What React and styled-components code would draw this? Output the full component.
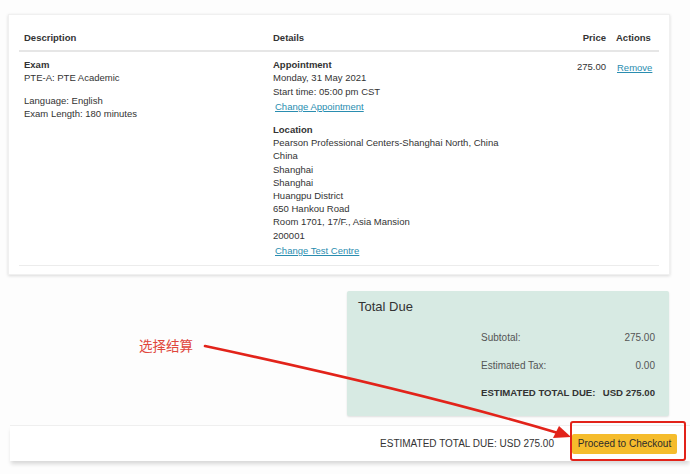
import React from 'react';
import styled, { createGlobalStyle } from 'styled-components';

const GlobalStyle = createGlobalStyle`
  html, body {
    margin: 0;
    padding: 0;
    background: #fdfdfd;
  }
  body {
    font-family: "Liberation Sans", Arial, sans-serif;
    color: #333;
  }
`;

const Page = styled.div`
  position: relative;
  width: 690px;
  height: 474px;
  overflow: hidden;
  padding-top: 14px;
  box-sizing: border-box;
`;

const Card = styled.div`
  margin-left: 8px;
  width: 662px;
  box-sizing: border-box;
  padding: 10px 10px 8px;
  background: #fff;
  border: 1px solid #f0f0f0;
  box-shadow: 0 1px 3px rgba(0, 0, 0, 0.14);
`;

const Table = styled.div`
  display: grid;
  grid-template-columns: 249px 1fr 82px 48px;
  border-bottom: 1px solid #ececec;
  font-size: 9.5px;
  line-height: 13.2px;
`;

const HeadCell = styled.div`
  padding: 6px 5px 6px;
  font-weight: bold;
  color: #333;
  border-bottom: 2px solid #e6e6e6;
  text-align: ${({ $right }) => ($right ? 'right' : 'left')};
`;

const Cell = styled.div`
  padding: ${({ $top }) => $top || 6}px 5px ${({ $bottom }) => $bottom || 0}px;
  text-align: ${({ $right }) => ($right ? 'right' : 'left')};
  color: #333;
`;

const Label = styled.div`
  font-weight: bold;
`;

const Line = styled.div``;

const Block = styled.div`
  margin-top: ${({ $gap }) => $gap || 0}px;
`;

const Link = styled.a`
  display: inline-block;
  margin-top: ${({ $gap }) => $gap || 0}px;
  margin-left: ${({ $indent }) => $indent || 0}px;
  color: #2a8db0;
  text-decoration: underline;
  cursor: pointer;
`;

const SummaryWrap = styled.div`
  display: flex;
  justify-content: flex-end;
  margin-top: 16px;
  padding-right: 21px;
`;

const Summary = styled.div`
  width: 322px;
  height: 125px;
  box-sizing: border-box;
  padding: 8px 14px 0 11px;
  background: #d7eae3;
  border-radius: 2px;
  box-shadow: 0 1px 2px rgba(0, 0, 0, 0.12);
`;

const SummaryTitle = styled.div`
  font-size: 13px;
  line-height: 16px;
  color: #333;
  margin-bottom: 9px;
`;

const SummaryRows = styled.div`
  margin-left: 123px;
`;

const SummaryRow = styled.div`
  display: flex;
  justify-content: space-between;
  height: 27.5px;
  align-items: center;
  font-size: ${({ $strong }) => ($strong ? '9.6px' : '10px')};
  font-weight: ${({ $strong }) => ($strong ? 'bold' : 'normal')};
  color: ${({ $strong }) => ($strong ? '#333' : '#555')};
`;

const Footer = styled.div`
  margin-top: 9px;
  margin-left: 10px;
  height: 35px;
  display: flex;
  align-items: center;
  justify-content: flex-end;
  gap: 18px;
  padding-right: 13px;
  background: #fff;
  border-top: 1px solid #efefef;
  box-shadow: 0 4px 4px -1px rgba(0, 0, 0, 0.15);
`;

const FooterTotal = styled.span`
  font-size: 10px;
  color: #333;
`;

const CheckoutButton = styled.button`
  width: 105px;
  height: 20px;
  padding: 0;
  border: none;
  border-radius: 2px;
  background: #f5bc2c;
  color: #2b2b2b;
  font-family: "Liberation Sans", Arial, sans-serif;
  font-size: 10px;
  cursor: pointer;
`;

const Overlay = styled.svg`
  position: absolute;
  left: 0;
  top: 0;
  pointer-events: none;
`;

const Note = styled.span`
  position: absolute;
  left: 139px;
  top: 336px;
  font-family: "Noto Sans CJK SC", sans-serif;
  font-size: 13.5px;
  line-height: 18px;
  color: #e0473c;
`;

const App = () => (
  <>
    <GlobalStyle />
    <Page>
      <Card>
        <Table>
          <HeadCell>Description</HeadCell>
          <HeadCell>Details</HeadCell>
          <HeadCell $right>Price</HeadCell>
          <HeadCell>Actions</HeadCell>

          <Cell>
            <Label>Exam</Label>
            <Line>PTE-A: PTE Academic</Line>
            <Block $gap={9}>
              <Line>Language: English</Line>
              <Line>Exam Length: 180 minutes</Line>
            </Block>
          </Cell>
          <Cell $bottom={8}>
            <Label>Appointment</Label>
            <Line>Monday, 31 May 2021</Line>
            <Line>Start time: 05:00 pm CST</Line>
            <Link $gap={2} $indent={2}>Change Appointment</Link>
            <Block $gap={10}>
              <Label>Location</Label>
              <Line>Pearson Professional Centers-Shanghai North, China</Line>
              <Line>China</Line>
              <Line>Shanghai</Line>
              <Line>Shanghai</Line>
              <Line>Huangpu District</Line>
              <Line>650 Hankou Road</Line>
              <Line>Room 1701, 17/F., Asia Mansion</Line>
              <Line>200001</Line>
              <Link $gap={2} $indent={2}>Change Test Centre</Link>
            </Block>
          </Cell>
          <Cell $right $top={8}>275.00</Cell>
          <Cell $top={9}>
            <Link $indent={1}>Remove</Link>
          </Cell>
        </Table>
      </Card>

      <SummaryWrap>
        <Summary>
          <SummaryTitle>Total Due</SummaryTitle>
          <SummaryRows>
            <SummaryRow>
              <span>Subtotal:</span>
              <span>275.00</span>
            </SummaryRow>
            <SummaryRow>
              <span>Estimated Tax:</span>
              <span>0.00</span>
            </SummaryRow>
            <SummaryRow $strong>
              <span>ESTIMATED TOTAL DUE:</span>
              <span>USD 275.00</span>
            </SummaryRow>
          </SummaryRows>
        </Summary>
      </SummaryWrap>

      <Footer>
        <FooterTotal>ESTIMATED TOTAL DUE: USD 275.00</FooterTotal>
        <CheckoutButton>Proceed to Checkout</CheckoutButton>
      </Footer>

      {/* annotation layer */}
      <Note>选择结算</Note>
      <Overlay width="690" height="474" viewBox="0 0 690 474">
        <path
          d="M205 346 Q 420 392 558 433"
          fill="none"
          stroke="#e2231a"
          strokeWidth="2.6"
          strokeLinecap="round"
        />
        <polygon points="571,437 553,438 559,426" fill="#e2231a" />
        <rect
          x="571"
          y="422"
          width="114"
          height="38"
          rx="2"
          fill="none"
          stroke="#e2231a"
          strokeWidth="2"
        />
      </Overlay>
    </Page>
  </>
);

export default App;
